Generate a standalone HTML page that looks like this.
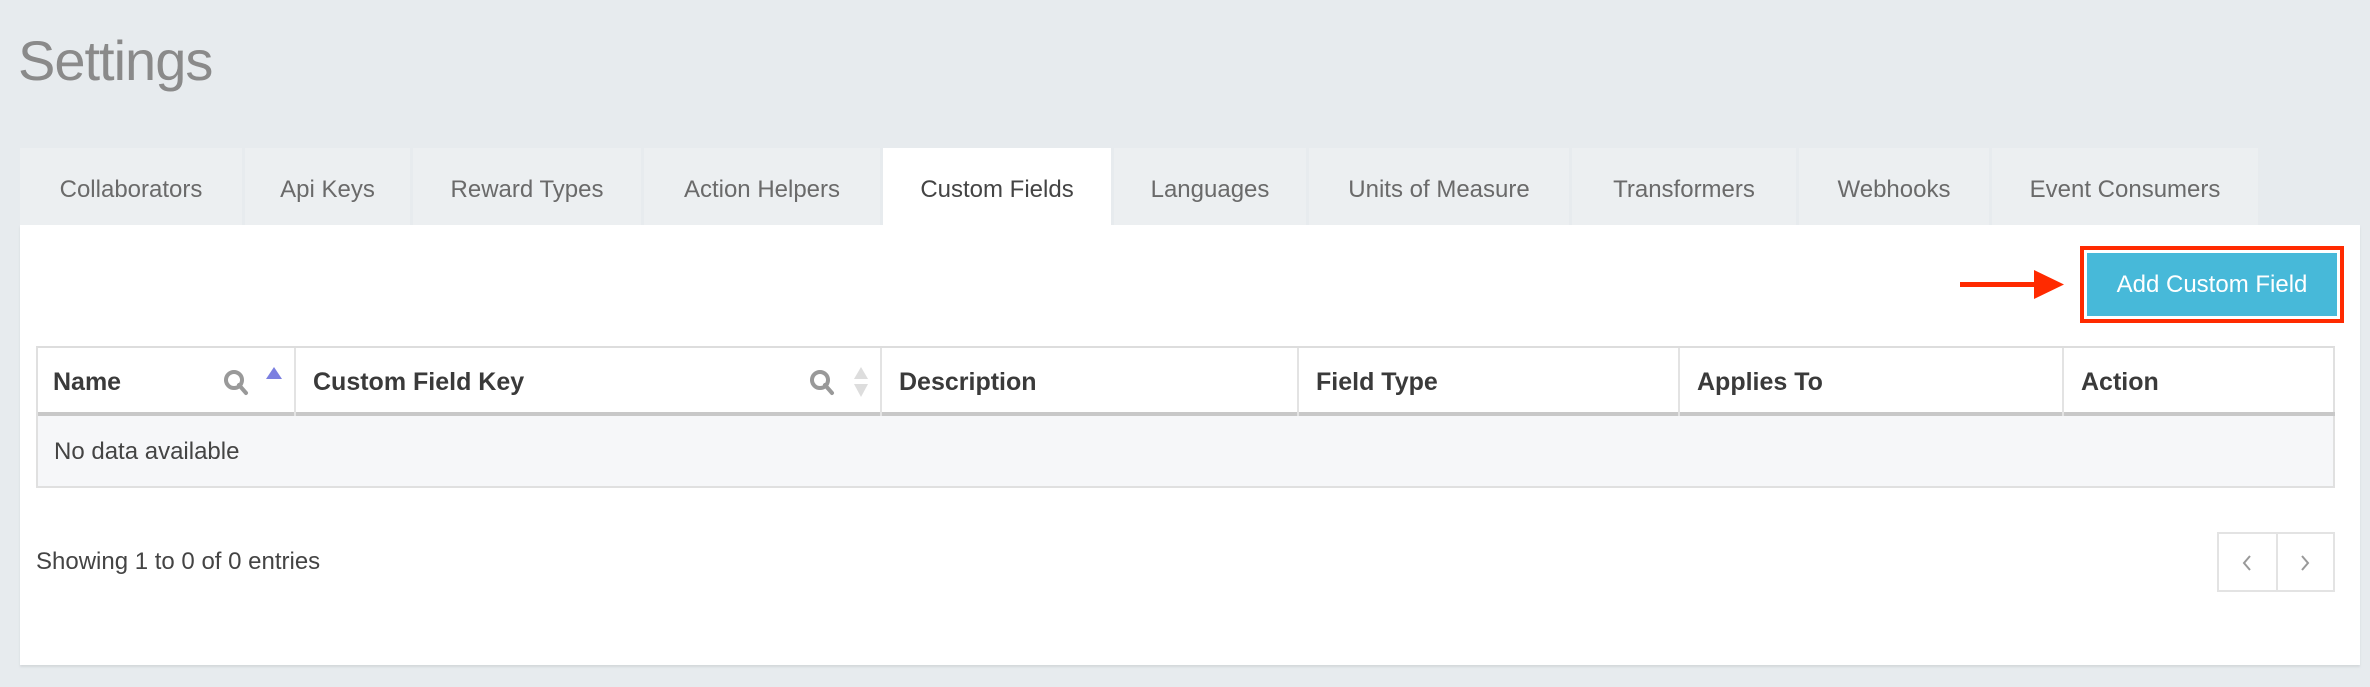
<!DOCTYPE html>
<html><head><style>
*{box-sizing:border-box;margin:0;padding:0}
body{width:2370px;height:687px;background:#e7ebee;font-family:"Liberation Sans",sans-serif;position:relative;overflow:hidden;color:#333}
.abs{position:absolute}
h1{position:absolute;left:18px;top:28px;font-weight:normal;font-size:56px;color:#8a8a8a;letter-spacing:-1px}
.tab{position:absolute;top:148px;height:77px;background:#eceff1;color:#6a6a6a;font-size:24px;text-align:center;line-height:84px;white-space:nowrap}
.tab.act{background:#fff;color:#444}
.panel{position:absolute;left:20px;top:225px;width:2340px;height:440px;background:#fff;box-shadow:0 2px 2px #d4d8db}
.th{position:absolute;top:348px;height:68px;line-height:68px;font-weight:bold;font-size:25px;color:#3a3a3a;padding-left:17px;border-left:2px solid #e3e3e3}
.txt{font-size:24px;color:#444}
</style></head><body>
<h1>Settings</h1>
<div class="tab" style="left:20px;width:222px">Collaborators</div>
<div class="tab" style="left:245px;width:165px">Api Keys</div>
<div class="tab" style="left:413px;width:228px">Reward Types</div>
<div class="tab" style="left:644px;width:236px">Action Helpers</div>
<div class="tab act" style="left:883px;width:228px">Custom Fields</div>
<div class="tab" style="left:1114px;width:192px">Languages</div>
<div class="tab" style="left:1309px;width:260px">Units of Measure</div>
<div class="tab" style="left:1572px;width:224px">Transformers</div>
<div class="tab" style="left:1799px;width:190px">Webhooks</div>
<div class="tab" style="left:1992px;width:266px">Event Consumers</div>
<div class="panel"></div>
<svg class="abs" style="left:1958px;top:268px" width="108" height="34"><rect x="2" y="14" width="80" height="5" fill="#ff2a00"/><polygon points="76,2 106,16.5 76,31" fill="#ff2a00"/></svg>
<div class="abs" style="left:2080px;top:246px;width:264px;height:77px;border:4px solid #ff2a00;background:#fff;padding:3px">
<div style="width:100%;height:100%;background:#47b9d9;color:#fff;font-size:24px;text-align:center;line-height:63px">Add Custom Field</div></div>
<div class="abs" style="left:36px;top:346px;width:2299px;height:142px;border:2px solid #e0e0e0;border-top:2px solid #ddd"></div>
<div class="abs" style="left:38px;top:412px;width:2297px;height:4px;background:#c8c8c8"></div>
<div class="abs" style="left:38px;top:416px;width:2295px;height:70px;background:#f6f7f9"></div>
<div class="th" style="left:36px;border-left:none">Name</div>
<div class="th" style="left:294px">Custom Field Key</div>
<div class="th" style="left:880px">Description</div>
<div class="th" style="left:1297px">Field Type</div>
<div class="th" style="left:1678px">Applies To</div>
<div class="th" style="left:2062px">Action</div>
<svg class="abs" style="left:222px;top:368px" width="30" height="30"><circle cx="12" cy="12" r="8" fill="none" stroke="#999" stroke-width="4"/><line x1="17" y1="17" x2="24" y2="25" stroke="#999" stroke-width="4" stroke-linecap="round"/></svg>
<svg class="abs" style="left:265px;top:366px" width="18" height="14"><polygon points="9,1 17,13 1,13" fill="#7b7fe0"/></svg>
<svg class="abs" style="left:808px;top:368px" width="30" height="30"><circle cx="12" cy="12" r="8" fill="none" stroke="#999" stroke-width="4"/><line x1="17" y1="17" x2="24" y2="25" stroke="#999" stroke-width="4" stroke-linecap="round"/></svg>
<svg class="abs" style="left:852px;top:366px" width="18" height="32"><polygon points="9,1 16,13 2,13" fill="#ddd"/><polygon points="9,31 16,18 2,18" fill="#ddd"/></svg>
<div class="abs txt" style="left:54px;top:438px">No data available</div>
<div class="abs txt" style="left:36px;top:548px">Showing 1 to 0 of 0 entries</div>
<div class="abs" style="left:2217px;top:532px;width:118px;height:60px;border:2px solid #e3e3e3"></div>
<div class="abs" style="left:2276px;top:532px;width:2px;height:60px;background:#e3e3e3"></div>
<svg class="abs" style="left:2241px;top:554px" width="12" height="18"><polyline points="9,2 3,9 9,16" fill="none" stroke="#999" stroke-width="2"/></svg>
<svg class="abs" style="left:2299px;top:554px" width="12" height="18"><polyline points="3,2 9,9 3,16" fill="none" stroke="#999" stroke-width="2"/></svg>
</body></html>
